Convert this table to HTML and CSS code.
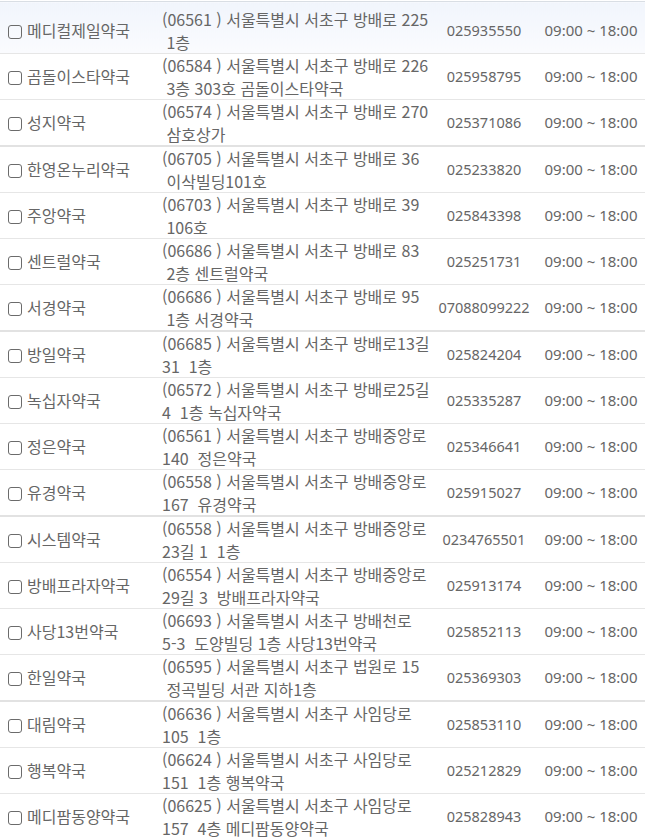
FILE: index.html
```html
<!DOCTYPE html>
<html lang="ko">
<head>
<meta charset="utf-8">
<link rel="stylesheet" href="styles.css">
</head>
<body>
<table class="list">
  <colgroup>
    <col class="c-name"><col class="c-addr"><col class="c-tel"><col class="c-time">
  </colgroup>
  <tbody>
    <tr class="hover"><td class="name"><span class="box"></span>메디컬제일약국</td><td class="addr">(06561 ) 서울특별시 서초구 방배로 225<br> 1층</td><td class="tel">025935550</td><td class="time">09:00 ~ 18:00</td></tr>
    <tr><td class="name"><span class="box"></span>곰돌이스타약국</td><td class="addr">(06584 ) 서울특별시 서초구 방배로 226<br> 3층 303호 곰돌이스타약국</td><td class="tel">025958795</td><td class="time">09:00 ~ 18:00</td></tr>
    <tr class="thick"><td class="name"><span class="box"></span>성지약국</td><td class="addr">(06574 ) 서울특별시 서초구 방배로 270<br> 삼호상가</td><td class="tel">025371086</td><td class="time">09:00 ~ 18:00</td></tr>
    <tr><td class="name"><span class="box"></span>한영온누리약국</td><td class="addr">(06705 ) 서울특별시 서초구 방배로 36<br> 이삭빌딩101호</td><td class="tel">025233820</td><td class="time">09:00 ~ 18:00</td></tr>
    <tr><td class="name"><span class="box"></span>주앙약국</td><td class="addr">(06703 ) 서울특별시 서초구 방배로 39<br> 106호</td><td class="tel">025843398</td><td class="time">09:00 ~ 18:00</td></tr>
    <tr><td class="name"><span class="box"></span>센트럴약국</td><td class="addr">(06686 ) 서울특별시 서초구 방배로 83<br> 2층 센트럴약국</td><td class="tel">025251731</td><td class="time">09:00 ~ 18:00</td></tr>
    <tr class="thick"><td class="name"><span class="box"></span>서경약국</td><td class="addr">(06686 ) 서울특별시 서초구 방배로 95<br> 1층 서경약국</td><td class="tel">07088099222</td><td class="time">09:00 ~ 18:00</td></tr>
    <tr><td class="name"><span class="box"></span>방일약국</td><td class="addr">(06685 ) 서울특별시 서초구 방배로13길<br>31  1층</td><td class="tel">025824204</td><td class="time">09:00 ~ 18:00</td></tr>
    <tr><td class="name"><span class="box"></span>녹십자약국</td><td class="addr">(06572 ) 서울특별시 서초구 방배로25길<br>4  1층 녹십자약국</td><td class="tel">025335287</td><td class="time">09:00 ~ 18:00</td></tr>
    <tr><td class="name"><span class="box"></span>정은약국</td><td class="addr">(06561 ) 서울특별시 서초구 방배중앙로<br>140  정은약국</td><td class="tel">025346641</td><td class="time">09:00 ~ 18:00</td></tr>
    <tr class="thick"><td class="name"><span class="box"></span>유경약국</td><td class="addr">(06558 ) 서울특별시 서초구 방배중앙로<br>167  유경약국</td><td class="tel">025915027</td><td class="time">09:00 ~ 18:00</td></tr>
    <tr><td class="name"><span class="box"></span>시스템약국</td><td class="addr">(06558 ) 서울특별시 서초구 방배중앙로<br>23길 1  1층</td><td class="tel">0234765501</td><td class="time">09:00 ~ 18:00</td></tr>
    <tr><td class="name"><span class="box"></span>방배프라자약국</td><td class="addr">(06554 ) 서울특별시 서초구 방배중앙로<br>29길 3  방배프라자약국</td><td class="tel">025913174</td><td class="time">09:00 ~ 18:00</td></tr>
    <tr><td class="name"><span class="box"></span>사당13번약국</td><td class="addr">(06693 ) 서울특별시 서초구 방배천로<br>5-3  도양빌딩 1층 사당13번약국</td><td class="tel">025852113</td><td class="time">09:00 ~ 18:00</td></tr>
    <tr class="thick"><td class="name"><span class="box"></span>한일약국</td><td class="addr">(06595 ) 서울특별시 서초구 법원로 15<br> 정곡빌딩 서관 지하1층</td><td class="tel">025369303</td><td class="time">09:00 ~ 18:00</td></tr>
    <tr><td class="name"><span class="box"></span>대림약국</td><td class="addr">(06636 ) 서울특별시 서초구 사임당로<br>105  1층</td><td class="tel">025853110</td><td class="time">09:00 ~ 18:00</td></tr>
    <tr><td class="name"><span class="box"></span>행복약국</td><td class="addr">(06624 ) 서울특별시 서초구 사임당로<br>151  1층 행복약국</td><td class="tel">025212829</td><td class="time">09:00 ~ 18:00</td></tr>
    <tr><td class="name"><span class="box"></span>메디팜동양약국</td><td class="addr">(06625 ) 서울특별시 서초구 사임당로<br>157  4층 메디팜동양약국</td><td class="tel">025828943</td><td class="time">09:00 ~ 18:00</td></tr>
  </tbody>
</table>
</body>
</html>
```
FILE: styles.css
```css
html, body {
  margin: 0;
  padding: 0;
  background: #ffffff;
}
body {
  padding-top: 1px;
  font-family: "Noto Sans CJK KR", sans-serif;
  font-size: 16px;
  color: #666666;
}
.list {
  width: 645px;
  border-collapse: collapse;
  table-layout: fixed;
  border-top: 1px solid #d9dee4;
}
.c-name { width: 155px; }
.c-addr { width: 278px; }
.c-tel { width: 102px; }
.c-time { width: 110px; }
.list td {
  padding: 0;
  line-height: 22.5px;
  vertical-align: middle;
  border-bottom: 1px solid #e6e6e6;
}
.list tr.thick td {
  border-bottom: 2px solid #e2e2e2;
}
.list tr.hover td {
  background: linear-gradient(#f1f5fc, #fafbfe);
  padding-top: 6px;
}
.name {
  padding-left: 8px !important;
  white-space: nowrap;
}
.box {
  display: inline-block;
  width: 12px;
  height: 12px;
  border: 1.5px solid #6b6b6b;
  border-radius: 3px;
  margin-right: 5px;
  vertical-align: -2px;
}
.addr {
  padding-left: 7px !important;
  white-space: pre;
}
.tel, .time {
  font-family: "Noto Sans", "Noto Sans CJK KR", sans-serif;
  font-size: 14.5px;
  text-align: center;
  white-space: nowrap;
}
.time {
  font-size: 15px;
  padding-left: 2px !important;
}
```
